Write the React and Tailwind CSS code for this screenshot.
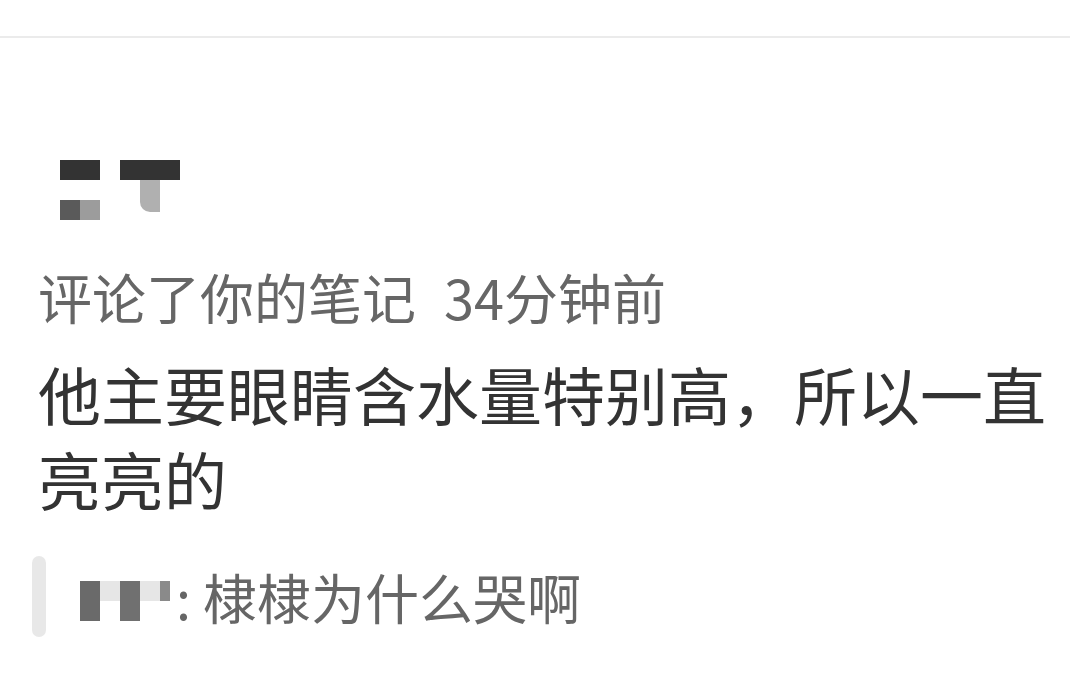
import React from 'react';

// Pixelated name blocks (username is masked)
const MaskedName = () => (
    <div className="flex items-start gap-[20px] h-[66px] ml-[22px]">
        <div className="flex flex-col w-[40px] mt-[5px]">
            <div className="h-[20px] bg-[#333333]" />
            <div className="h-[20px]" />
            <div className="flex h-[20px]">
                <div className="w-[20px] bg-[#5a5a5a]" />
                <div className="w-[20px] bg-[#9c9c9c]" />
            </div>
        </div>
        <div className="flex flex-col w-[60px] mt-[5px]">
            <div className="h-[20px] bg-[#333333]" />
            <div className="flex h-[32px]">
                <div className="w-[20px]" />
                <div className="w-[20px] bg-[#b0b0b0] rounded-bl-[10px]" />
            </div>
        </div>
    </div>
);

const MaskedReplyName = () => (
    <div className="flex items-start h-[40px] mt-[8px]">
        <div className="w-[20px] h-[40px] bg-[#6a6a6a]" />
        <div className="w-[20px] h-[20px] bg-[#e6e6e6]" />
        <div className="w-[20px] h-[40px] bg-[#707070]" />
        <div className="w-[20px] h-[20px] bg-[#e6e6e6]" />
        <div className="w-[10px] h-[20px] bg-[#8a8a8a]" />
    </div>
);

export default function App() {
    return (
        <div className="w-[1070px] h-[692px] bg-white overflow-hidden font-['Noto_Sans_CJK_SC','Noto_Sans',sans-serif]">
            <div className="h-[38px] border-b-2 border-[#ebebeb]" />

            <div className="pl-[38px] pt-[117px]">
                <MaskedName />

                <div className="mt-[41px] flex items-baseline text-[54px] leading-[70px] text-[#666666]">
                    <span>评论了你的笔记</span>
                    <span className="ml-[28px]">34分钟前</span>
                </div>

                <p className="mt-[18px] pr-[20px] text-[63px] leading-[85px] text-[#333333]">
                    他主要眼睛含水量特别高，所以一直亮亮的
                </p>
            </div>

            <div className="mt-[36px] ml-[32px] flex items-center">
                <div className="w-[14px] h-[81px] rounded-full bg-[#e8e8e8]" />
                <div className="ml-[34px] flex items-center">
                    <MaskedReplyName />
                    <span className="ml-[6px] text-[54px] leading-[70px] text-[#666666]">: 棣棣为什么哭啊</span>
                </div>
            </div>
        </div>
    );
}
